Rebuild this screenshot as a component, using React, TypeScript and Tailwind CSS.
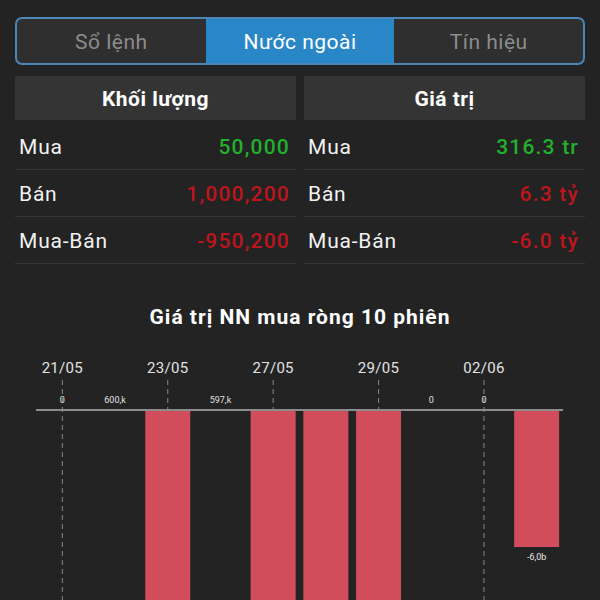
import React from 'react'

const font = { fontFamily: 'Roboto, "Liberation Sans", sans-serif' }

const tabs = ['Sổ lệnh', 'Nước ngoài', 'Tín hiệu']

const volRows = [
  { label: 'Mua', value: '50,000', up: true },
  { label: 'Bán', value: '1,000,200', up: false },
  { label: 'Mua-Bán', value: '-950,200', up: false },
]

const valRows = [
  { label: 'Mua', value: '316.3 tr', up: true },
  { label: 'Bán', value: '6.3 tỷ', up: false },
  { label: 'Mua-Bán', value: '-6.0 tỷ', up: false },
]

// 10 sessions, value in billions (bars below baseline are net sell)
const sessions = [
  { v: 0, label: '0' },
  { v: 0.0006, label: '600,k' },
  { v: -20, label: '' },
  { v: 0.000597, label: '597,k' },
  { v: -20, label: '' },
  { v: -20, label: '' },
  { v: -20, label: '' },
  { v: 0, label: '0' },
  { v: 0, label: '0' },
  { v: -6.0, label: '-6,0b' },
]

const dates: Record<number, string> = { 0: '21/05', 2: '23/05', 4: '27/05', 6: '29/05', 8: '02/06' }

function StatColumn({ title, rows }: { title: string; rows: typeof volRows }) {
  return (
    <div className="flex flex-1 flex-col">
      <div className="flex h-[44px] items-center justify-center bg-[#343434] pt-[4px] text-[21px] font-bold tracking-[0.5px] text-white">
        {title}
      </div>
      <div className="mt-[3px] flex flex-col">
        {rows.map((r) => (
          <div key={r.label} className="flex h-[47px] items-center justify-between border-b border-[#363636] pl-[4px] pr-[6px] pt-[3px] text-[21px]">
            <span className="tracking-[0.8px] text-[#f2f2f2]">{r.label}</span>
            <span className={r.up ? 'font-medium tracking-[1.2px] text-[#22b02c]' : 'font-medium tracking-[1.2px] text-[#bd151c]'}>
              {r.value}
            </span>
          </div>
        ))}
      </div>
    </div>
  )
}

function NetChart() {
  const left = 36
  const slot = 52.7
  const base = 410
  const scale = 136 / 6
  return (
    <svg width="600" height="271" viewBox="0 329 600 271" className="block">
      {Object.entries(dates).map(([i, d]) => {
        const cx = left + slot * (Number(i) + 0.5)
        return (
          <g key={d}>
            <text x={cx} y={373} fill="#e2e2e2" fontSize={15} letterSpacing={0.3} textAnchor="middle" fontFamily="Roboto, sans-serif">
              {d}
            </text>
            <line x1={cx} y1={380} x2={cx} y2={600} stroke="#8a8a8a" strokeWidth={1} strokeDasharray="5 4" />
          </g>
        )
      })}
      {sessions.map((s, i) => {
        const cx = left + slot * (i + 0.5)
        if (s.v < 0) {
          const h = -s.v * scale
          return (
            <g key={i}>
              <rect x={cx - 22.5} y={base + 1} width={45} height={h} fill="#d14d5b" />
              {s.label && (
                <text x={cx} y={base + h + 14} fill="#e8e8e8" fontSize={9} textAnchor="middle" fontFamily="Roboto, sans-serif">
                  {s.label}
                </text>
              )}
            </g>
          )
        }
        return (
          <text key={i} x={cx} y={403} fill="#e0e0e0" fontSize={9} textAnchor="middle" fontFamily="Roboto, sans-serif">
            {s.label}
          </text>
        )
      })}
      <line x1={left} y1={base} x2={563} y2={base} stroke="#8c8c8c" strokeWidth={2} />
    </svg>
  )
}

export default function App() {
  return (
    <div className="flex h-[600px] w-[600px] flex-col overflow-hidden bg-[#232323]" style={font}>
      <div className="px-[15px] pt-[17px]">
        <div className="flex h-[48px] overflow-hidden rounded-[7px] border-2 border-[#4a86b8] bg-[#2f2f2f]">
          {tabs.map((t, i) => (
            <div
              key={t}
              className={
                i === 1
                  ? 'flex flex-1 items-center justify-center bg-[#2a87c7] pt-[3px] text-[21px] tracking-[0.5px] text-white'
                  : 'flex flex-1 items-center justify-center pt-[3px] text-[21px] tracking-[0.5px] text-[#8c8c8c]'
              }
            >
              {t}
            </div>
          ))}
        </div>
        <div className="mt-[11px] flex gap-[8px]">
          <StatColumn title="Khối lượng" rows={volRows} />
          <StatColumn title="Giá trị" rows={valRows} />
        </div>
      </div>
      <div className="mt-[41px] h-[24px] text-center text-[21px] font-bold leading-[24px] tracking-[1px] text-white">
        Giá trị NN mua ròng 10 phiên
      </div>
      <NetChart />
    </div>
  )
}
